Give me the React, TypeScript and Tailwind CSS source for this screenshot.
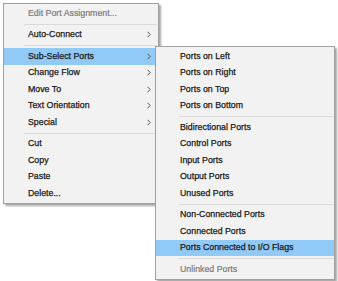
import React from "react";

type Item =
  | { type: "sep" }
  | { type: "item"; label: string; disabled?: boolean; sub?: boolean; active?: boolean };

const mainItems: Item[] = [
  { type: "item", label: "Edit Port Assignment...", disabled: true },
  { type: "sep" },
  { type: "item", label: "Auto-Connect", sub: true },
  { type: "sep" },
  { type: "item", label: "Sub-Select Ports", sub: true, active: true },
  { type: "item", label: "Change Flow", sub: true },
  { type: "item", label: "Move To", sub: true },
  { type: "item", label: "Text Orientation", sub: true },
  { type: "item", label: "Special", sub: true },
  { type: "sep" },
  { type: "item", label: "Cut" },
  { type: "item", label: "Copy" },
  { type: "item", label: "Paste" },
  { type: "item", label: "Delete..." },
];

const subItems: Item[] = [
  { type: "item", label: "Ports on Left" },
  { type: "item", label: "Ports on Right" },
  { type: "item", label: "Ports on Top" },
  { type: "item", label: "Ports on Bottom" },
  { type: "sep" },
  { type: "item", label: "Bidirectional Ports" },
  { type: "item", label: "Control Ports" },
  { type: "item", label: "Input Ports" },
  { type: "item", label: "Output Ports" },
  { type: "item", label: "Unused Ports" },
  { type: "sep" },
  { type: "item", label: "Non-Connected Ports" },
  { type: "item", label: "Connected Ports" },
  { type: "item", label: "Ports Connected to I/O Flags", active: true },
  { type: "sep" },
  { type: "item", label: "Unlinked Ports", disabled: true },
];

const Chevron = () => (
  <svg width="4" height="7" viewBox="0 0 4 7" className="block">
    <path d="M0.5 0.8 L3.2 3.5 L0.5 6.2" stroke="#505050" strokeWidth="1" fill="none" />
  </svg>
);

function Menu({ items, sub }: { items: Item[]; sub?: boolean }) {
  return (
    <div
      className={
        "bg-[#f2f2f2] border border-[#a0a0a0] py-[1px] shadow-[2px_2px_2px_rgba(0,0,0,0.35)] " +
        (sub ? "w-[180px]" : "w-[156px]")
      }
    >
      {items.map((it, i) =>
        it.type === "sep" ? (
          <div key={i} className="h-[5px] flex items-center">
            <div
              className={
                "h-px bg-[#d9d9d9] flex-1 " + (sub ? "ml-[23px] mr-[1px]" : "ml-[20px] mr-[1px]")
              }
            />
          </div>
        ) : (
          <div
            key={i}
            className={
              "h-[16.5px] flex items-center justify-between pl-[24px] pr-[7px] " +
              (it.active ? "bg-[#91c9f7] " : "") +
              (it.disabled
                ? "text-[#7a7a7a] [-webkit-text-stroke:0.2px_#7a7a7a]"
                : "text-[#1a1a1a] [-webkit-text-stroke:0.25px_#1a1a1a]")
            }
          >
            <span className="whitespace-nowrap leading-none">{it.label}</span>
            {it.sub ? <Chevron /> : null}
          </div>
        )
      )}
    </div>
  );
}

export default function App() {
  return (
    <div
      className="relative w-[338px] h-[281px] bg-white overflow-hidden text-[8.8px]"
      style={{ fontFamily: '"Liberation Sans", Arial, sans-serif' }}
    >
      <div className="pt-[3px] pl-[3px]">
        <Menu items={mainItems} />
      </div>
      <div className="absolute left-[155px] top-[46px]">
        <Menu items={subItems} sub />
      </div>
    </div>
  );
}
